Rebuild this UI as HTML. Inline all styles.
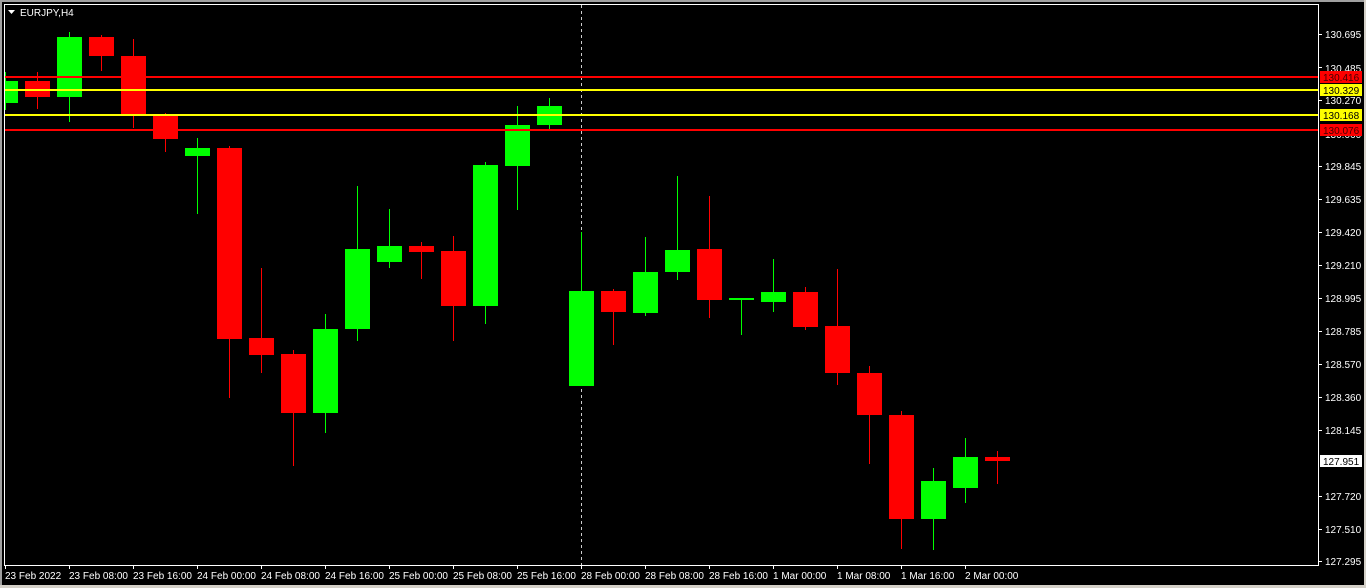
<!DOCTYPE html>
<html><head><meta charset="utf-8"><style>
html,body{margin:0;padding:0;background:#000;width:1366px;height:588px;overflow:hidden}
svg{display:block}
text{font-family:"Liberation Sans",sans-serif;font-size:10px}
</style></head><body>
<svg width="1366" height="588" xmlns="http://www.w3.org/2000/svg">
<rect width="1366" height="588" fill="#000"/>
<rect x="0" y="0" width="1366" height="2" fill="#a0a0a0"/>
<rect x="0" y="0" width="2" height="588" fill="#a0a0a0"/>
<rect x="1364" y="0" width="2" height="588" fill="#d4d0c8"/>
<rect x="0" y="585" width="1366" height="3" fill="#d4d0c8"/>
<rect x="4.5" y="4.5" width="1314" height="561" fill="none" stroke="#fff" stroke-width="1"/>
<line x1="581.5" y1="5" x2="581.5" y2="565" stroke="#ccc" stroke-dasharray="3,3"/>
<g id="c"></g>
<!-- lines -->
<rect x="5" y="76" width="1313" height="2" fill="#f00"/>
<rect x="5" y="89" width="1313" height="2" fill="#ff0"/>
<rect x="5" y="114" width="1313" height="2" fill="#ff0"/>
<rect x="5" y="129" width="1313" height="2" fill="#f00"/>
<polygon points="8,10 15,10 11.5,14" fill="#fff"/>
<text x="20" y="16" fill="#fff">EURJPY,H4</text>
<g fill="#fff">
<text x="1325" y="38">130.695</text>
<text x="1325" y="72">130.485</text>
<text x="1325" y="104">130.270</text>
<text x="1325" y="138">130.060</text>
<text x="1325" y="170">129.845</text>
<text x="1325" y="203">129.635</text>
<text x="1325" y="236">129.420</text>
<text x="1325" y="269">129.210</text>
<text x="1325" y="302">128.995</text>
<text x="1325" y="335">128.785</text>
<text x="1325" y="368">128.570</text>
<text x="1325" y="401">128.360</text>
<text x="1325" y="434">128.145</text>
<text x="1325" y="500">127.720</text>
<text x="1325" y="533">127.510</text>
<text x="1325" y="565">127.295</text>
</g>
<g stroke="#fff">
<line x1="1318" y1="34.5" x2="1322" y2="34.5"/><line x1="1318" y1="67.5" x2="1322" y2="67.5"/>
<line x1="1318" y1="100.5" x2="1322" y2="100.5"/><line x1="1318" y1="166.5" x2="1322" y2="166.5"/>
<line x1="1318" y1="199.5" x2="1322" y2="199.5"/><line x1="1318" y1="232.5" x2="1322" y2="232.5"/>
<line x1="1318" y1="265.5" x2="1322" y2="265.5"/><line x1="1318" y1="298.5" x2="1322" y2="298.5"/>
<line x1="1318" y1="331.5" x2="1322" y2="331.5"/><line x1="1318" y1="364.5" x2="1322" y2="364.5"/>
<line x1="1318" y1="397.5" x2="1322" y2="397.5"/><line x1="1318" y1="430.5" x2="1322" y2="430.5"/>
<line x1="1318" y1="496.5" x2="1322" y2="496.5"/><line x1="1318" y1="529.5" x2="1322" y2="529.5"/>
<line x1="1318" y1="561.5" x2="1322" y2="561.5"/>
</g>
<rect x="1320" y="71" width="42" height="12" fill="#f00"/><text x="1323" y="81" fill="#400">130.416</text>
<rect x="1320" y="84" width="42" height="12" fill="#ff0"/><text x="1323" y="94" fill="#000">130.329</text>
<rect x="1320" y="109" width="42" height="12" fill="#ff0"/><text x="1323" y="119" fill="#000">130.168</text>
<rect x="1320" y="124" width="42" height="12" fill="#f00"/><text x="1323" y="134" fill="#400">130.076</text>
<rect x="1320" y="455" width="42" height="12" fill="#fff"/><text x="1323" y="465" fill="#000">127.951</text>
<g id="t" fill="#fff"></g>
</svg>
<script>
var d=[[0,'g',81,103,72,110],[1,'r',81,97,72,109],[2,'g',37,97,32,122],[3,'r',37,56,35,71],[4,'r',56,115,39,128],[5,'r',115,139,113,152],[6,'g',148,156,138,214],[7,'r',148,339,146,398],[8,'r',338,355,268,373],[9,'r',354,413,350,466],[10,'g',329,413,314,433],[11,'g',249,329,186,341],[12,'g',246,262,209,268],[13,'r',246,252,242,279],[14,'r',251,306,236,341],[15,'g',165,306,162,324],[16,'g',125,166,106,210],[17,'g',106,125,98,131],[18,'g',291,386,232,386],[19,'r',291,312,289,345],[20,'g',272,313,237,316],[21,'g',250,272,176,280],[22,'r',249,300,196,318],[23,'g',298,300,298,335],[24,'g',292,302,259,312],[25,'r',292,327,287,330],[26,'r',326,373,269,385],[27,'r',373,415,366,464],[28,'r',415,519,411,549],[29,'g',481,519,468,550],[30,'g',457,488,438,503],[31,'r',457,461,451,484]];
var ns='http://www.w3.org/2000/svg',g=document.getElementById('c');
function r(x,y,w,h,f){var e=document.createElementNS(ns,'rect');e.setAttribute('x',x);e.setAttribute('y',y);e.setAttribute('width',w);e.setAttribute('height',h);e.setAttribute('fill',f);g.appendChild(e);}
d.forEach(function(a){var c=5+32*a[0],f=a[1]=='g'?'#0f0':'#f00';r(c,a[4],1,a[5]-a[4],f);var bx=Math.max(c-12,5);r(bx,a[2],c+13-bx,Math.max(a[3]-a[2],2),f);});
var L=['23 Feb 2022','23 Feb 08:00','23 Feb 16:00','24 Feb 00:00','24 Feb 08:00','24 Feb 16:00','25 Feb 00:00','25 Feb 08:00','25 Feb 16:00','28 Feb 00:00','28 Feb 08:00','28 Feb 16:00','1 Mar 00:00','1 Mar 08:00','1 Mar 16:00','2 Mar 00:00'];
var t=document.getElementById('t');
L.forEach(function(s,i){var x=5+64*i;var e=document.createElementNS(ns,'text');e.setAttribute('x',x);e.setAttribute('y',579);e.textContent=s;t.appendChild(e);var l=document.createElementNS(ns,'rect');l.setAttribute('x',x);l.setAttribute('y',565);l.setAttribute('width',1);l.setAttribute('height',4);t.appendChild(l);});
</script>
</body></html>
